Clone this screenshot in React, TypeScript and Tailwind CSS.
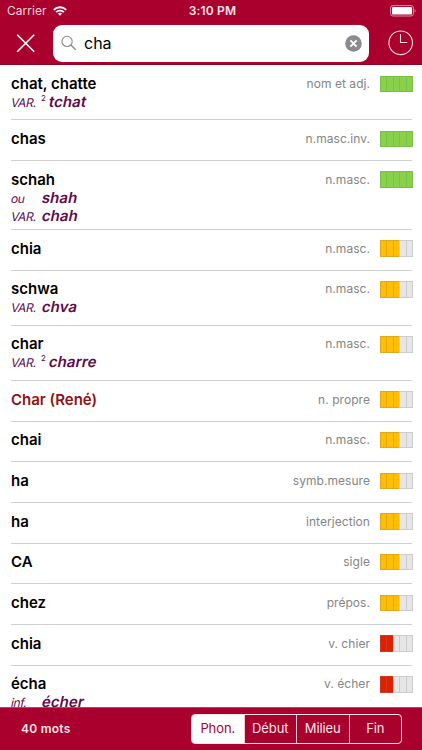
import clsx from "clsx";

type Variant = { label: string; text: string; sup?: string };

type Entry = {
  word: string;
  kind: string;
  score: number;
  variants?: Variant[];
  proper?: boolean;
};

const entries: Entry[] = [
  { word: "chat, chatte", kind: "nom et adj.", score: 5, variants: [{ label: "VAR.", sup: "2", text: "tchat" }] },
  { word: "chas", kind: "n.masc.inv.", score: 5 },
  {
    word: "schah",
    kind: "n.masc.",
    score: 5,
    variants: [
      { label: "ou", text: "shah" },
      { label: "VAR.", text: "chah" },
    ],
  },
  { word: "chia", kind: "n.masc.", score: 3 },
  { word: "schwa", kind: "n.masc.", score: 3, variants: [{ label: "VAR.", text: "chva" }] },
  { word: "char", kind: "n.masc.", score: 3, variants: [{ label: "VAR.", sup: "2", text: "charre" }] },
  { word: "Char (René)", kind: "n. propre", score: 3, proper: true },
  { word: "chai", kind: "n.masc.", score: 3 },
  { word: "ha", kind: "symb.mesure", score: 3 },
  { word: "ha", kind: "interjection", score: 3 },
  { word: "CA", kind: "sigle", score: 3 },
  { word: "chez", kind: "prépos.", score: 3 },
  { word: "chia", kind: "v. chier", score: 2 },
  { word: "écha", kind: "v. écher", score: 2, variants: [{ label: "inf.", text: "écher" }] },
];

const modes = ["Phon.", "Début", "Milieu", "Fin"];

function StatusBar() {
  return (
    <div className="grid h-[22px] grid-cols-3 items-center pr-[5px] pl-[7px] text-[12px]">
      <div className="flex items-center gap-[6px] text-[#f6d5dc]">
        <span className="tracking-[0.05px]">Carrier</span>
        <svg width="14" height="10" viewBox="0 0 14 10" fill="none" stroke="#fff" strokeWidth="1.9">
          <path d="M0.8 3.8a8.8 8.8 0 0 1 12.4 0" />
          <path d="M3.1 6.2a5.5 5.5 0 0 1 7.8 0" />
          <path d="M7 9.8 4.9 7.7a3 3 0 0 1 4.2 0z" fill="#fff" stroke="none" />
        </svg>
      </div>
      <span className="pl-px text-center font-semibold tracking-[0.2px] text-[#fbe3e8]">3:10 PM</span>
      <svg className="justify-self-end" width="27" height="12" viewBox="0 0 27 12">
        <rect x="0.6" y="0.6" width="22.8" height="10.4" rx="2.4" fill="none" stroke="#e0909f" />
        <rect x="2" y="2" width="20" height="7.6" rx="1.2" fill="#fff" />
        <path d="M24.7 4v3.8c1.2-.5 1.2-3.3 0-3.8z" fill="#e0909f" />
      </svg>
    </div>
  );
}

function SearchBar() {
  return (
    <div className="flex h-[42px] items-center pr-[8px] pl-[16px]">
      <svg width="20" height="20" viewBox="0 0 20 20" fill="none" stroke="#fff" strokeWidth="1.6">
        <path d="M1.2 1.7 18.2 18.7M18.2 1.7 1.2 18.7" />
      </svg>
      <div className="ml-[17px] flex h-[37px] w-[316px] items-center rounded-[9px] bg-white pr-[7px] pl-2">
        <svg width="16" height="16" viewBox="0 0 16 16" fill="none" stroke="#8a8a8e" strokeWidth="1.1">
          <circle cx="6.1" cy="6.4" r="5.1" />
          <path d="m9.9 10.1 4.8 4.6" strokeWidth="1.4" />
        </svg>
        <span className="ml-[7px] flex-1 text-[16px] leading-5 text-black">cha</span>
        <svg width="17" height="17" viewBox="0 0 17 17">
          <circle cx="8.5" cy="8.5" r="8.3" fill="#8a8a8f" />
          <path d="m5.4 5.4 6.2 6.2M11.6 5.4l-6.2 6.2" stroke="#fff" strokeWidth="1.8" />
        </svg>
      </div>
      <svg className="ml-auto" width="26" height="26" viewBox="0 0 26 26" fill="none" stroke="#fbd9e0" strokeWidth="1.1">
        <circle cx="12.7" cy="12.8" r="11.8" />
        <path d="M12.5 4v8.5h6.7" />
      </svg>
    </div>
  );
}

function Meter({ score }: { score: number }) {
  const fill =
    score === 5
      ? "border-[#7cc04c] bg-[#87d14b]"
      : score === 3
        ? "border-[#dfa91c] bg-[#ffbf00]"
        : "border-[#d0391c] bg-[#de2200]";
  return (
    <div className="flex h-[16.5px] w-[33px]">
      {[0, 1, 2, 3, 4].map((i) => (
        <span
          key={i}
          className={clsx(
            "flex-1 border-y border-l last:border-r",
            i < score ? fill : "border-[#cccccc] bg-[#e6e6e6]"
          )}
        />
      ))}
    </div>
  );
}

function Row({ entry }: { entry: Entry }) {
  const count = entry.variants?.length ?? 0;
  return (
    <li
      className={clsx(
        "ml-[11px] mr-[10px] flex shrink-0 items-start border-b border-[#cfcfcf]",
        count === 0 && "h-[40.7px]",
        count === 1 && "h-[55.1px]",
        count === 2 && "h-[69px]"
      )}
    >
      <div className="flex-1 pt-[8.5px]">
        <p
          className={clsx(
            "text-[15px] leading-[19px] font-semibold",
            entry.proper ? "text-[#8f1215]" : "text-black"
          )}
        >
          {entry.word}
        </p>
        {/* slanted upright letters, the true italic has a single-storey a */}
        {entry.variants?.map((v) => (
          <p key={v.text} className="flex h-[18px] items-baseline text-[15px] leading-[18px] text-[#5f0a4a]">
            <span className={clsx("text-[12px] tracking-[-0.35px]", v.sup ? "w-[30px]" : "w-[31px]")}>
              <span className="inline-block -skew-x-12">{v.label}</span>
            </span>
            {v.sup && <span className="w-[8px] -translate-y-[6px] text-[8px] leading-none">{v.sup}</span>}
            <span className="inline-block -skew-x-12 font-semibold tracking-[0.1px]">{v.text}</span>
          </p>
        ))}
      </div>
      <span className="mt-[9.5px] text-[12px] leading-[18px] tracking-[0.05px] text-[#858585]">{entry.kind}</span>
      <div className="mt-[10.2px] -mr-[1px] ml-[10px]">
        <Meter score={entry.score} />
      </div>
    </li>
  );
}

function Footer() {
  return (
    <footer className="flex h-[43px] shrink-0 items-center justify-between border-t border-[#c2405c] bg-[#a9002d] pr-[20px] pl-[21px]">
      <span className="text-[12px] font-semibold tracking-[0.25px] text-[#fbe3e8]">40 mots</span>
      <div className="flex h-[30px] w-[211px] divide-x divide-[#f7c9d2] overflow-hidden rounded-[4px] border border-[#fbe3e8]">
        {modes.map((mode, i) => (
          <button
            key={mode}
            className={clsx(
              "flex-1 basis-0 text-center text-[13px] tracking-[-0.1px]",
              i === 0 ? "bg-white text-[#a9002d]" : "text-[#fbe3e8]"
            )}
          >
            {mode}
          </button>
        ))}
      </div>
    </footer>
  );
}

export default function App() {
  return (
    <div className="flex h-[750px] w-[422px] flex-col overflow-hidden bg-white font-['Inter',sans-serif]">
      <header className="h-[65.35px] shrink-0 border-b border-[#920027] bg-[#a9002d]">
        <StatusBar />
        <SearchBar />
      </header>
      <ul className="flex min-h-0 flex-1 flex-col overflow-hidden">
        {entries.map((entry, i) => (
          <Row key={i} entry={entry} />
        ))}
      </ul>
      <Footer />
    </div>
  );
}
